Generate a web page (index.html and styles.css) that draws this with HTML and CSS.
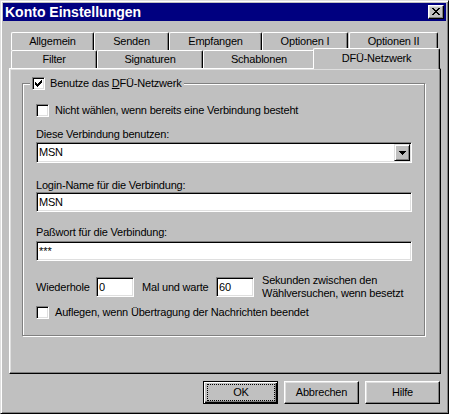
FILE: index.html
```html
<!DOCTYPE html>
<html lang="de">
<head>
<meta charset="utf-8">
<title>Konto Einstellungen</title>
<link rel="stylesheet" href="styles.css">
</head>
<body>
<div class="window">
  <div class="titlebar">
    <span class="title">Konto Einstellungen</span>
    <span class="close"><svg class="px" width="8" height="7" viewBox="0 0 8 7"><path d="M0 0h2v1h-2z M6 0h2v1h-2z M1 1h2v1h-2z M5 1h2v1h-2z M2 2h4v1h-4z M3 3h2v1h-2z M2 4h4v1h-4z M1 5h2v1h-2z M5 5h2v1h-2z M0 6h2v1h-2z M6 6h2v1h-2z" fill="#000"/></svg></span>
  </div>
  <div class="body">
    <div class="tabrow">
      <div class="tab w-allg">Allgemein</div>
      <div class="tab w-send">Senden</div>
      <div class="tab w-empf">Empfangen</div>
      <div class="tab w-opt1">Optionen I</div>
      <div class="tab w-opt2">Optionen II</div>
    </div>
    <div class="tabrow">
      <div class="tab w-filt">Filter</div>
      <div class="tab w-sign">Signaturen</div>
      <div class="tab w-schab">Schablonen</div>
      <div class="tab tab-sel w-dfu">DFÜ-Netzwerk</div>
    </div>
    <div class="panel">
      <div class="group">
        <div class="legend">
          <span class="cb"><svg class="px" width="9" height="9" viewBox="0 0 9 9"><path d="M7 1h1v1h-1z M6 2h2v1h-2z M1 3h1v1h-1z M5 3h3v1h-3z M1 4h2v1h-2z M4 4h3v1h-3z M1 5h5v1h-5z M2 6h3v1h-3z M3 7h1v1h-1z" fill="#000"/></svg></span>
          <span>Benutze das <u>D</u>FÜ-Netzwerk</span>
        </div>
        <div class="cbrow"><span class="cb"></span><span>Nicht wählen, wenn bereits eine Verbindung besteht</span></div>
        <div class="lbl lbl-1">Diese Verbindung benutzen:</div>
        <div class="field combo">
          <span class="val">MSN</span>
          <span class="ddbtn"><svg class="px" width="7" height="4" viewBox="0 0 7 4"><path d="M0 0h7v1h-7z M1 1h5v1h-5z M2 2h3v1h-3z M3 3h1v1h-1z" fill="#000"/></svg></span>
        </div>
        <div class="lbl lbl-2">Login-Name für die Verbindung:</div>
        <div class="field"><span class="val">MSN</span></div>
        <div class="lbl lbl-3">Paßwort für die Verbindung:</div>
        <div class="field field-pw"><span class="val">***</span></div>
        <div class="repeat">
          <span class="rw-1">Wiederhole</span>
          <div class="field field-small"><span class="val">0</span></div>
          <span class="rw-2">Mal und warte</span>
          <div class="field field-small"><span class="val">60</span></div>
          <span class="rw-3">Sekunden zwischen den<br>Wählversuchen, wenn besetzt</span>
        </div>
        <div class="cbrow cbrow-last"><span class="cb"></span><span>Auflegen, wenn Übertragung der Nachrichten beendet</span></div>
      </div>
    </div>
    <div class="buttons">
      <div class="btn btn-default"><span class="focus">OK</span></div>
      <div class="btn">Abbrechen</div>
      <div class="btn">Hilfe</div>
    </div>
  </div>
</div>
</body>
</html>
```

FILE: styles.css
```css
* { box-sizing: border-box; }
html, body { margin: 0; padding: 0; background: #c0c0c0; }
body {
  font-family: "Liberation Sans", Arial, sans-serif;
  font-size: 11px;
  line-height: 13px;
  letter-spacing: -0.2px;
  color: #000;
}
.px { display: block; shape-rendering: crispEdges; }

.window {
  width: 449px;
  height: 414px;
  background: #c0c0c0;
  border: 1px solid;
  border-color: #dfdfdf #000 #000 #dfdfdf;
  box-shadow: inset 1px 1px #fff, inset -1px -1px #808080;
  padding: 2px;
}

.titlebar {
  height: 18px;
  background: #000080;
  color: #fff;
  display: flex;
  justify-content: space-between;
  align-items: flex-start;
  overflow: hidden;
}
.title {
  font-weight: bold;
  font-size: 14px;
  line-height: 17px;
  letter-spacing: 0;
  padding: 1px 0 0 2px;
}
.close {
  width: 16px;
  height: 14px;
  margin: 2px 2px 0 0;
  background: #c0c0c0;
  border: 1px solid;
  border-color: #fff #000 #000 #fff;
  box-shadow: inset -1px -1px #808080, inset 1px 1px #dfdfdf;
  padding: 2px 0 0 3px;
}

.body { padding: 11px 5px 0 6px; }

.tabrow {
  display: flex;
  height: 18px;
  padding-left: 2px;
  align-items: flex-start;
}
.tab {
  height: 18px;
  background: #c0c0c0;
  border: 1px solid;
  border-bottom: 0;
  border-color: #fff #000 #000 #fff;
  box-shadow: inset -1px 0 #808080;
  border-radius: 2px 2px 0 0;
  text-align: center;
  line-height: 16px;
  white-space: nowrap;
}
.w-allg { width: 83px; }
.w-send { width: 75px; }
.w-empf { width: 93px; }
.w-opt1 { width: 86px; }
.w-opt2 { width: 89px; margin-left: 1px; }
.w-filt { width: 86px; }
.w-sign { width: 106px; }
.w-schab { width: 112px; }
.w-dfu { width: 127px; }
.tab-sel {
  height: 21px;
  margin: -2px -2px -1px -2px;
  padding-top: 1px;
  position: relative;
  z-index: 1;
}

.panel {
  height: 306px;
  border: 1px solid;
  border-color: #fff #000 #000 #fff;
  box-shadow: inset -1px -1px #808080, inset 1px 1px #dfdfdf;
  padding: 14px 0 0 12px;
}

.group {
  position: relative;
  width: 403px;
  height: 253px;
  border: 1px solid #808080;
  box-shadow: inset 1px 1px #fff, 1px 1px #fff;
  padding: 20px 0 0 13px;
}
.legend {
  position: absolute;
  left: 7px;
  top: -7px;
  height: 13px;
  display: flex;
  align-items: center;
  gap: 5px;
  padding: 0 2px;
  background: #c0c0c0;
  white-space: nowrap;
}

.cb {
  flex: none;
  width: 13px;
  height: 13px;
  background: #fff;
  border: 1px solid;
  border-color: #808080 #fff #fff #808080;
  box-shadow: inset 1px 1px #000, inset -1px -1px #dfdfdf;
  padding: 1px;
}
.cbrow {
  display: flex;
  align-items: center;
  gap: 6px;
  height: 13px;
  white-space: nowrap;
}
.cbrow-last { margin-top: 6px; }

.lbl { height: 13px; white-space: nowrap; }
.lbl-1 { margin-top: 11px; margin-bottom: 1px; }
.lbl-2 { margin-top: 16px; }
.lbl-3 { margin-top: 14px; margin-bottom: 2px; }

.field {
  width: 376px;
  height: 20px;
  background: #fff;
  border: 1px solid;
  border-color: #808080 #fff #fff #808080;
  box-shadow: inset 1px 1px #000, inset -1px -1px #dfdfdf;
  padding: 1px;
  display: flex;
  align-items: center;
}
.val { flex: 1; padding-left: 1px; white-space: nowrap; }
.combo { height: 21px; }
.field-pw .val { letter-spacing: 0; }
.ddbtn {
  flex: none;
  width: 16px;
  height: 17px;
  align-self: stretch;
  background: #c0c0c0;
  border: 1px solid;
  border-color: #dfdfdf #000 #000 #dfdfdf;
  box-shadow: inset 1px 1px #fff, inset -1px -1px #808080;
  display: flex;
  align-items: center;
  justify-content: center;
  padding-top: 1px;
}

.repeat {
  margin-top: 13px;
  display: flex;
  align-items: center;
  white-space: nowrap;
}
.rw-1 { width: 60px; }
.field-small { width: 38px; }
.rw-2 { width: 74px; margin-left: 8px; }
.rw-3 { margin-left: 8px; }

.buttons {
  display: flex;
  justify-content: flex-end;
  gap: 6px;
  margin-top: 7px;
  padding-right: 1px;
}
.btn {
  width: 75px;
  height: 23px;
  border: 1px solid;
  border-color: #fff #000 #000 #fff;
  box-shadow: inset -1px -1px #808080, inset 1px 1px #dfdfdf;
  display: flex;
  align-items: center;
  justify-content: center;
}
.btn-default {
  border-color: #000;
  box-shadow: inset 1px 1px #fff, inset -1px -1px #000, inset -2px -2px #808080;
  padding: 2px 2px 2px 3px;
  align-items: stretch;
}
.focus {
  flex: 1;
  border: 1px dotted #000;
  display: flex;
  align-items: center;
  justify-content: center;
}
```
